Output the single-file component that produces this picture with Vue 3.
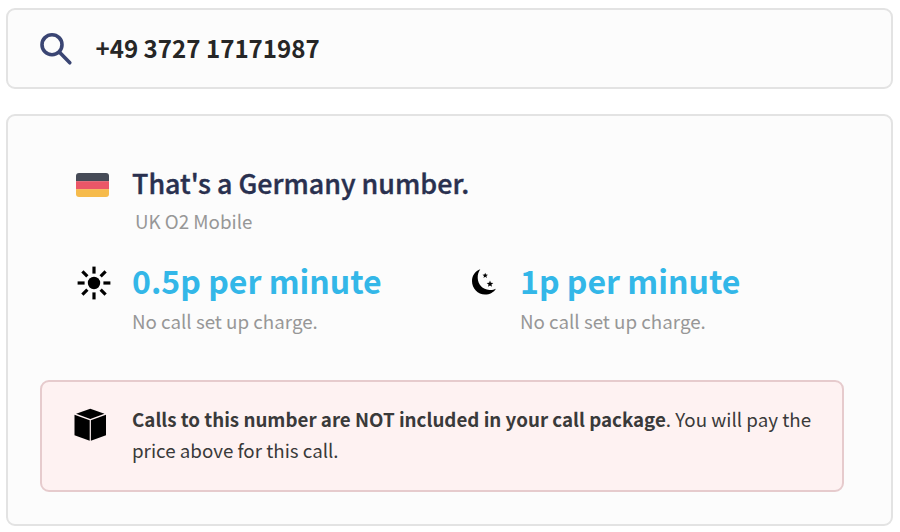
<template>
  <div class="lookup">
    <div class="search-box">
      <svg class="search-icon" viewBox="0 0 34 34">
        <circle cx="12" cy="12.7" r="10" />
        <path d="M19.3 20L29.8 30.8" />
      </svg>
      <span class="phone">{{ phone }}</span>
    </div>

    <div class="result">
      <div class="country">
        <svg class="flag" viewBox="0 0 33 24">
          <clipPath id="flag-shape">
            <rect width="33" height="24" rx="3" />
          </clipPath>
          <g clip-path="url(#flag-shape)">
            <rect width="33" height="8.3" fill="#464b57" />
            <rect y="8.2" width="33" height="8.2" fill="#eb5768" />
            <rect y="16.2" width="33" height="8" fill="#f6bb4c" />
          </g>
        </svg>
        <div>
          <h2 class="country-title">That's a Germany number.</h2>
          <p class="network">UK O2 Mobile</p>
        </div>
      </div>

      <div class="rates">
        <div v-for="rate in rates" :key="rate.period" class="rate">
          <svg v-if="rate.period === 'day'" class="sun" viewBox="0 0 34 34">
            <circle cx="17" cy="17" r="6.2" />
            <path
              v-for="angle in rays"
              :key="angle"
              d="M17 0.6V7.6"
              :transform="`rotate(${angle} 17 17)`"
            />
          </svg>
          <svg v-else class="moon" viewBox="0 0 24 26">
            <path d="M8.3 0.2C3.3 1.8 0 6.4 0 12C0 19.6 5.8 25.5 13 25.5C17.8 25.5 21.9 23.2 23.9 19.7C21.9 20.8 19.7 21.2 17.4 21C10.6 20.5 5.9 15.5 5.7 9C5.6 5.7 6.5 2.6 8.3 0.2Z" />
            <path :d="star" transform="translate(13.2 6.6) scale(2.9)" />
            <path :d="star" transform="translate(18 15) scale(3.5)" />
          </svg>
          <div>
            <p class="price">{{ rate.price }}</p>
            <p class="setup">No call set up charge.</p>
          </div>
        </div>
      </div>

      <div class="notice">
        <svg class="package" viewBox="0 0 32 33">
          <path d="M16.3 0.8L30.5 5.7L16.3 10.9L2.1 5.7Z" />
          <path d="M0.5 6.7L15.7 12.3V32.7L0.5 27.2Z" />
          <path d="M32 6.7L16.9 12.3V32.7L32 27.2Z" />
        </svg>
        <p class="notice-text">
          <strong>Calls to this number are NOT included in your call package</strong>. You will pay the<br>
          price above for this call.
        </p>
      </div>
    </div>
  </div>
</template>

<script setup>
const phone = '+49 3727 17171987'

const rates = [
  { period: 'day', price: '0.5p per minute' },
  { period: 'night', price: '1p per minute' }
]

const rays = [0, 45, 90, 135, 180, 225, 270, 315]

const star = 'M0 -1L0.25 -0.34L0.95 -0.31L0.4 0.13L0.59 0.81L0 0.42L-0.59 0.81L-0.4 0.13L-0.95 -0.31L-0.25 -0.34Z'
</script>

<style>
body {
  margin: 0;
  background: #fff;
}
</style>

<style scoped>
.lookup {
  box-sizing: border-box;
  height: 532px;
  padding: 8px 7px 0 6px;
  font-family: "Noto Sans CJK SC", "Noto Sans", sans-serif;
}

h2,
p {
  margin: 0;
  white-space: nowrap;
}

svg {
  display: block;
  flex-shrink: 0;
}

.search-box {
  box-sizing: border-box;
  height: 81px;
  display: flex;
  align-items: center;
  padding-left: 32px;
  background: #fcfcfc;
  border: 2px solid #e3e3e3;
  border-radius: 9px;
}

.search-icon {
  width: 34px;
  height: 34px;
  margin-right: 21.5px;
  fill: none;
  stroke: #3a4573;
  stroke-width: 3.6;
  stroke-linecap: round;
}

.phone {
  padding-bottom: 2px;
  font-size: 24.1px;
  line-height: 36px;
  font-weight: 700;
  color: #262626;
}

.result {
  box-sizing: border-box;
  height: 412px;
  margin-top: 25px;
  padding: 50px 47px 0 32px;
  background: #fcfcfc;
  border: 2px solid #e3e3e3;
  border-radius: 9px;
}

.country {
  display: flex;
  height: 94px;
  padding-left: 36px;
}

.flag {
  width: 33px;
  height: 24px;
  margin: 7px 23px 0 0;
}

.country-title {
  font-size: 26.85px;
  line-height: 34px;
  font-weight: 500;
  color: #29304f;
  -webkit-text-stroke: 0.4px #29304f;
}

.network {
  margin: 7px 0 0 3px;
  font-size: 18.75px;
  line-height: 28px;
  color: #979797;
}

.rates {
  display: grid;
  grid-template-columns: 388px 1fr;
  height: 120px;
  padding-left: 36px;
}

.rate {
  display: flex;
}

.sun {
  width: 34px;
  height: 34px;
  margin: 6px 21px 0 1px;
}

.sun path {
  stroke: #000;
  stroke-width: 3.2;
}

.moon {
  width: 24px;
  height: 26px;
  margin: 9px 24px 0 8px;
}

.price {
  font-size: 32.05px;
  line-height: 40px;
  font-weight: 700;
  color: #33b7e8;
}

.setup {
  margin-top: 7px;
  font-size: 18.75px;
  line-height: 28px;
  color: #979797;
}

.notice {
  box-sizing: border-box;
  height: 112px;
  display: flex;
  padding: 21px 0 0 32px;
  background: #fef2f2;
  border: 2px solid #e6cbcd;
  border-radius: 9px;
}

.package {
  width: 32px;
  height: 33px;
  margin: 5px 26px 0 0;
}

.notice-text {
  font-size: 18.75px;
  line-height: 31px;
  color: #3a3a3a;
}
</style>
